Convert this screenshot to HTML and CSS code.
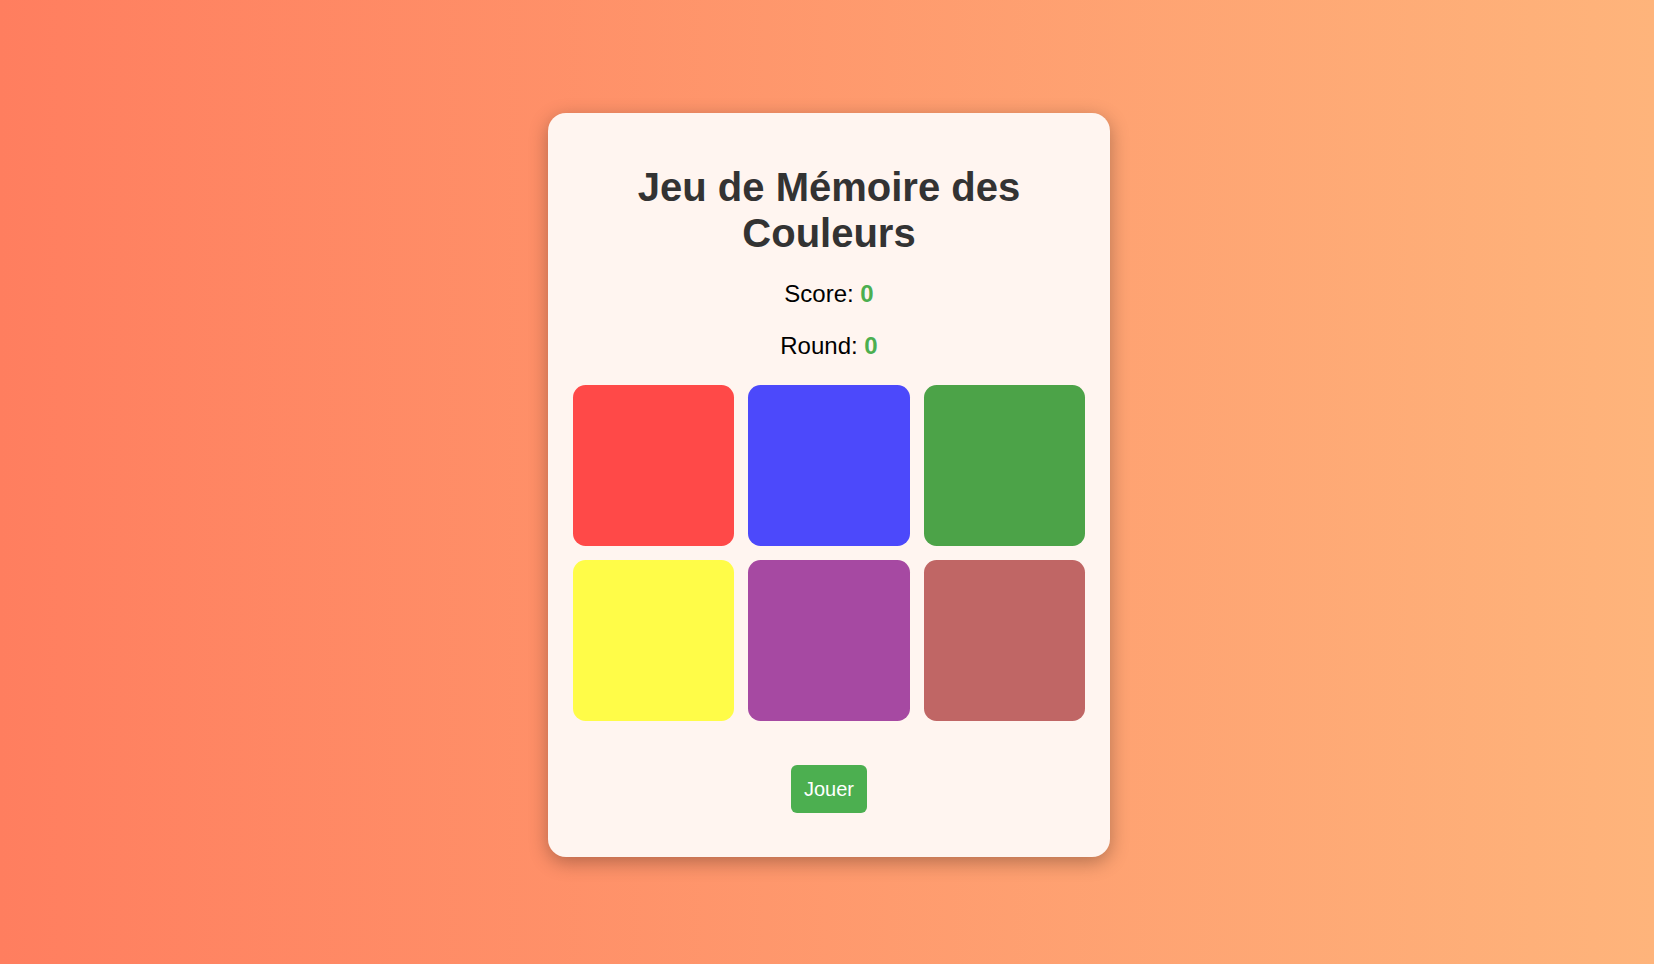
FILE: index.html
```html
<!DOCTYPE html>
<html lang="fr">
<head>
<meta charset="utf-8">
<title>Jeu de Mémoire des Couleurs</title>
<link rel="stylesheet" href="styles.css">
</head>
<body>
<main class="card">
  <h1 class="title">Jeu de Mémoire des Couleurs</h1>
  <p class="stat">Score: <span class="value">0</span></p>
  <p class="stat">Round: <span class="value">0</span></p>
  <div class="grid">
    <div class="tile red"></div>
    <div class="tile blue"></div>
    <div class="tile green"></div>
    <div class="tile yellow"></div>
    <div class="tile purple"></div>
    <div class="tile brown"></div>
  </div>
  <div class="controls">
    <button class="play">Jouer</button>
  </div>
</main>
</body>
</html>
```

FILE: styles.css
```css
html, body {
  height: 100%;
}
body {
  margin: 0;
  box-sizing: border-box;
  padding: 6px 0 0 4px;
  font-family: "Liberation Sans", Arial, sans-serif;
  background: linear-gradient(to right, #ff7e5f, #feb47b);
  display: flex;
  align-items: center;
  justify-content: center;
}
.card {
  width: 512px;
  padding: 25px;
  background: #fff5f0;
  border-radius: 18px;
  box-shadow: 0 5px 19px rgba(0, 0, 0, 0.3);
  text-align: center;
}
.title {
  font-size: 40px;
  font-weight: bold;
  color: #333;
  margin: 26px 0 19px;
  line-height: 46px;
}
.stat {
  font-size: 24px;
  color: #000;
  margin: 24px 0;
  line-height: 28px;
}
.value {
  color: #4caf50;
  font-weight: bold;
}
.grid {
  display: grid;
  grid-template-columns: repeat(3, 1fr);
  gap: 13.8px;
  margin: 25px 0 0;
}
.tile {
  height: 161.4px;
  border-radius: 12.5px;
  opacity: 0.7;
}
.red { background: #ff0000; }
.blue { background: #0000ff; }
.green { background: #008000; }
.yellow { background: #ffff00; }
.purple { background: #800080; }
.brown { background: #a52a2a; }
.controls {
  margin: 44px 0 19px;
  display: flex;
  justify-content: center;
}
.play {
  font-family: "Liberation Sans", Arial, sans-serif;
  font-size: 20px;
  line-height: 23px;
  padding: 12.5px 12.5px;
  color: #fff;
  background: #4caf50;
  border: none;
  border-radius: 6px;
}
```
